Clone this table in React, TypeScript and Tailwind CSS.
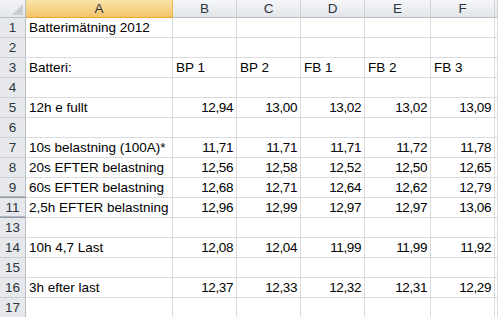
import React from "react";

type Row = { n: number; label?: string; cells?: string[]; text?: boolean; hiddenBelow?: boolean };

const rows: Row[] = [
  { n: 1, label: "Batterimätning 2012" },
  { n: 2 },
  { n: 3, label: "Batteri:", cells: ["BP 1", "BP 2", "FB 1", "FB 2", "FB 3"], text: true },
  { n: 4 },
  { n: 5, label: "12h e fullt", cells: ["12,94", "13,00", "13,02", "13,02", "13,09"] },
  { n: 6 },
  { n: 7, label: "10s belastning (100A)*", cells: ["11,71", "11,71", "11,71", "11,72", "11,78"] },
  { n: 8, label: "20s EFTER belastning", cells: ["12,56", "12,58", "12,52", "12,50", "12,65"] },
  { n: 9, label: "60s EFTER belastning", cells: ["12,68", "12,71", "12,64", "12,62", "12,79"], hiddenBelow: true },
  { n: 11, label: "2,5h EFTER belastning", cells: ["12,96", "12,99", "12,97", "12,97", "13,06"], hiddenBelow: true },
  { n: 13 },
  { n: 14, label: "10h 4,7 Last", cells: ["12,08", "12,04", "11,99", "11,99", "11,92"] },
  { n: 15 },
  { n: 16, label: "3h efter last", cells: ["12,37", "12,33", "12,32", "12,31", "12,29"] },
  { n: 17 },
];

// G is only a sliver at the right edge, so its letter is out of view
const colHeaders = ["B", "C", "D", "E", "F", ""];

export default function App() {
  return (
    <div
      className="w-[498px] h-[317px] overflow-hidden bg-white text-black"
      style={{ fontFamily: '"Liberation Sans", Arial, sans-serif' }}
    >
      <div className="grid grid-cols-[26px_147px_64px_64px_64px_66px_64px_1fr] text-[13.5px]">
        {/* Corner */}
        <div className="relative h-[18px] border-r border-b border-[#b9bec6] bg-gradient-to-b from-[#f3f4f6] to-[#e3e6ea]">
          <svg className="absolute right-[2px] bottom-[2px]" width="11" height="11" viewBox="0 0 11 11">
            <polygon points="11,0 11,11 0,11" fill="#c9ccd1" />
          </svg>
        </div>
        {/* Column A header - selected */}
        <div className="h-[18px] border-r border-b border-r-[#e8b959] border-b-[#f0a830] bg-gradient-to-b from-[#fae4a8] to-[#f2c468] text-center leading-[17px] text-[#2c3440]">
          A
        </div>
        {colHeaders.map((c, i) => (
          <div
            key={i}
            className="h-[18px] border-r border-b border-r-[#cdd1d7] border-b-[#b9bec6] bg-gradient-to-b from-[#f5f6f8] to-[#e2e5e9] text-center leading-[17px] text-[#2c3440]"
          >
            {c}
          </div>
        ))}

        {rows.map((r) => (
          <React.Fragment key={r.n}>
            <div
              className={`h-5 border-r border-b border-r-[#b9bec6] bg-[#e6e8ec] text-center leading-[19px] text-[#2c3440] ${
                r.hiddenBelow ? "border-b-[#8f98a4] shadow-[inset_0_-1px_0_#b4bac3]" : "border-b-[#cbcfd5]"
              }`}
            >
              {r.n}
            </div>
            <div className="h-5 border-r border-b border-[#dadcdd] px-[3px] leading-[19px] whitespace-nowrap">
              {r.label ?? ""}
            </div>
            {[0, 1, 2, 3, 4].map((i) => (
              <div
                key={i}
                className={`h-5 border-r border-b border-[#dadcdd] px-[3px] leading-[19px] whitespace-nowrap ${
                  r.text ? "text-left" : "text-right tracking-[-0.4px]"
                }`}
              >
                {r.cells?.[i] ?? ""}
              </div>
            ))}
            <div className="h-5 border-r border-b border-[#dadcdd]" />
          </React.Fragment>
        ))}
      </div>
    </div>
  );
}
